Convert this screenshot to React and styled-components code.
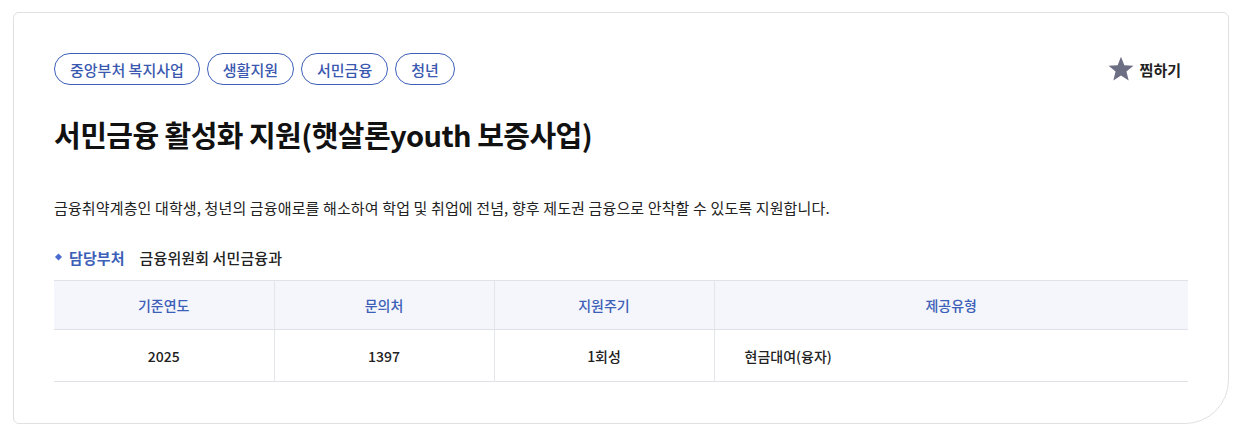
import styled, { createGlobalStyle } from 'styled-components';

const GlobalStyle = createGlobalStyle`
    * { box-sizing: border-box; }
    body {
        margin: 0;
        background: #fff;
        font-family: "Noto Sans CJK KR", "Noto Sans", sans-serif;
        color: #222;
    }
`;

const tags = ['중앙부처 복지사업', '생활지원', '서민금융', '청년'];
const heads = ['기준연도', '문의처', '지원주기', '제공유형'];
const cells = ['2025', '1397', '1회성', '현금대여(융자)'];

function App(){
    return(
        <>
            <GlobalStyle />
            <Card>
                <TopRow>
                    <TagList>
                        {tags.map((t) => <Tag key={t}>{t}</Tag>)}
                    </TagList>
                    <LikeButton>
                        <svg width="26" height="26" viewBox="0 0 24 24">
                            <path d="M12 0.6l3.1 7.9 8.4 0.5-6.5 5.3 2.1 8.3L12 18.1l-7.1 4.5 2.1-8.3L0.5 9l8.4-0.5z" fill="#6c6e84" />
                        </svg>
                        찜하기
                    </LikeButton>
                </TopRow>
                <Title>서민금융 활성화 지원(햇살론youth 보증사업)</Title>
                <Desc>금융취약계층인 대학생, 청년의 금융애로를 해소하여 학업 및 취업에 전념, 향후 제도권 금융으로 안착할 수 있도록 지원합니다.</Desc>
                <Dept>
                    <DeptLabel>담당부처</DeptLabel>
                    금융위원회 서민금융과
                </Dept>
                <Table>
                    <thead>
                        <tr>
                            {heads.map((h) => <Th key={h}>{h}</Th>)}
                        </tr>
                    </thead>
                    <tbody>
                        <tr>
                            {cells.map((c, i) => <Td key={c} $left={i === 3}>{c}</Td>)}
                        </tr>
                    </tbody>
                </Table>
            </Card>
        </>
    )
}

export default App;

const Card = styled.div`
    margin: 12px 0 0 13px;
    width: 1216px;
    height: 412px;
    border: 1px solid #e0e0e0;
    border-radius: 6px 6px 44px 6px;
    padding: 40px 40px 0 40px;
`;

const TopRow = styled.div`
    display: flex;
    justify-content: space-between;
    align-items: center;
    padding-right: 7px;
`;

const TagList = styled.ul`
    display: flex;
    gap: 7px;
    margin: 0;
    padding: 0;
    list-style: none;
`;

const Tag = styled.li`
    height: 32px;
    padding: 0 15px;
    display: flex;
    align-items: center;
    border: 1px solid #3d5fb8;
    border-radius: 16px;
    color: #3a58b0;
    font-size: 15px;
    font-weight: 500;
`;

const LikeButton = styled.button`
    display: flex;
    align-items: center;
    gap: 6px;
    border: 0;
    background: none;
    padding: 0;
    font-family: inherit;
    font-size: 15px;
    font-weight: 700;
    color: #222;
    cursor: pointer;
`;

const Title = styled.h2`
    margin: 28px 0 0;
    font-size: 29px;
    font-weight: 700;
    letter-spacing: -0.55px;
    line-height: 42px;
    color: #111;
`;

const Desc = styled.p`
    margin: 41px 0 0;
    font-size: 15px;
    letter-spacing: 0.13px;
    line-height: 24px;
    color: #222;
`;

const Dept = styled.div`
    margin-top: 25px;
    display: flex;
    align-items: center;
    gap: 15px;
    font-size: 15px;
    font-weight: 500;
    letter-spacing: 0.1px;
    color: #222;
    height: 24px;
`;

const DeptLabel = styled.span`
    position: relative;
    padding-left: 15px;
    color: #3d5fb8;
    font-weight: 700;

    &::before {
        content: '';
        position: absolute;
        left: 2px;
        top: 50%;
        width: 5px;
        height: 5px;
        background: #4a6bd0;
        transform: translateY(-50%) rotate(45deg);
    }
`;

const Table = styled.table`
    margin-top: 11px;
    width: 1134px;
    border-collapse: collapse;
    table-layout: fixed;
    border-top: 1px solid #dfe1e6;
    border-bottom: 1px solid #dfe1e6;

    th:nth-child(-n+3), td:nth-child(-n+3) {
        width: 220px;
    }
`;

const Th = styled.th`
    height: 49px;
    background: #f4f6fb;
    color: #3d5fb8;
    font-size: 14px;
    font-weight: 500;
    border-bottom: 1px solid #dfe1e6;
    border-left: 1px solid #e3e5ea;

    &:first-child { border-left: 0; }
`;

const Td = styled.td`
    height: 52px;
    text-align: ${(p) => p.$left ? 'left' : 'center'};
    padding: 0 ${(p) => p.$left ? '30px' : '0'};
    font-size: 14px;
    font-weight: 500;
    color: #222;
    border-left: 1px solid #e3e5ea;

    &:first-child { border-left: 0; }
`;
